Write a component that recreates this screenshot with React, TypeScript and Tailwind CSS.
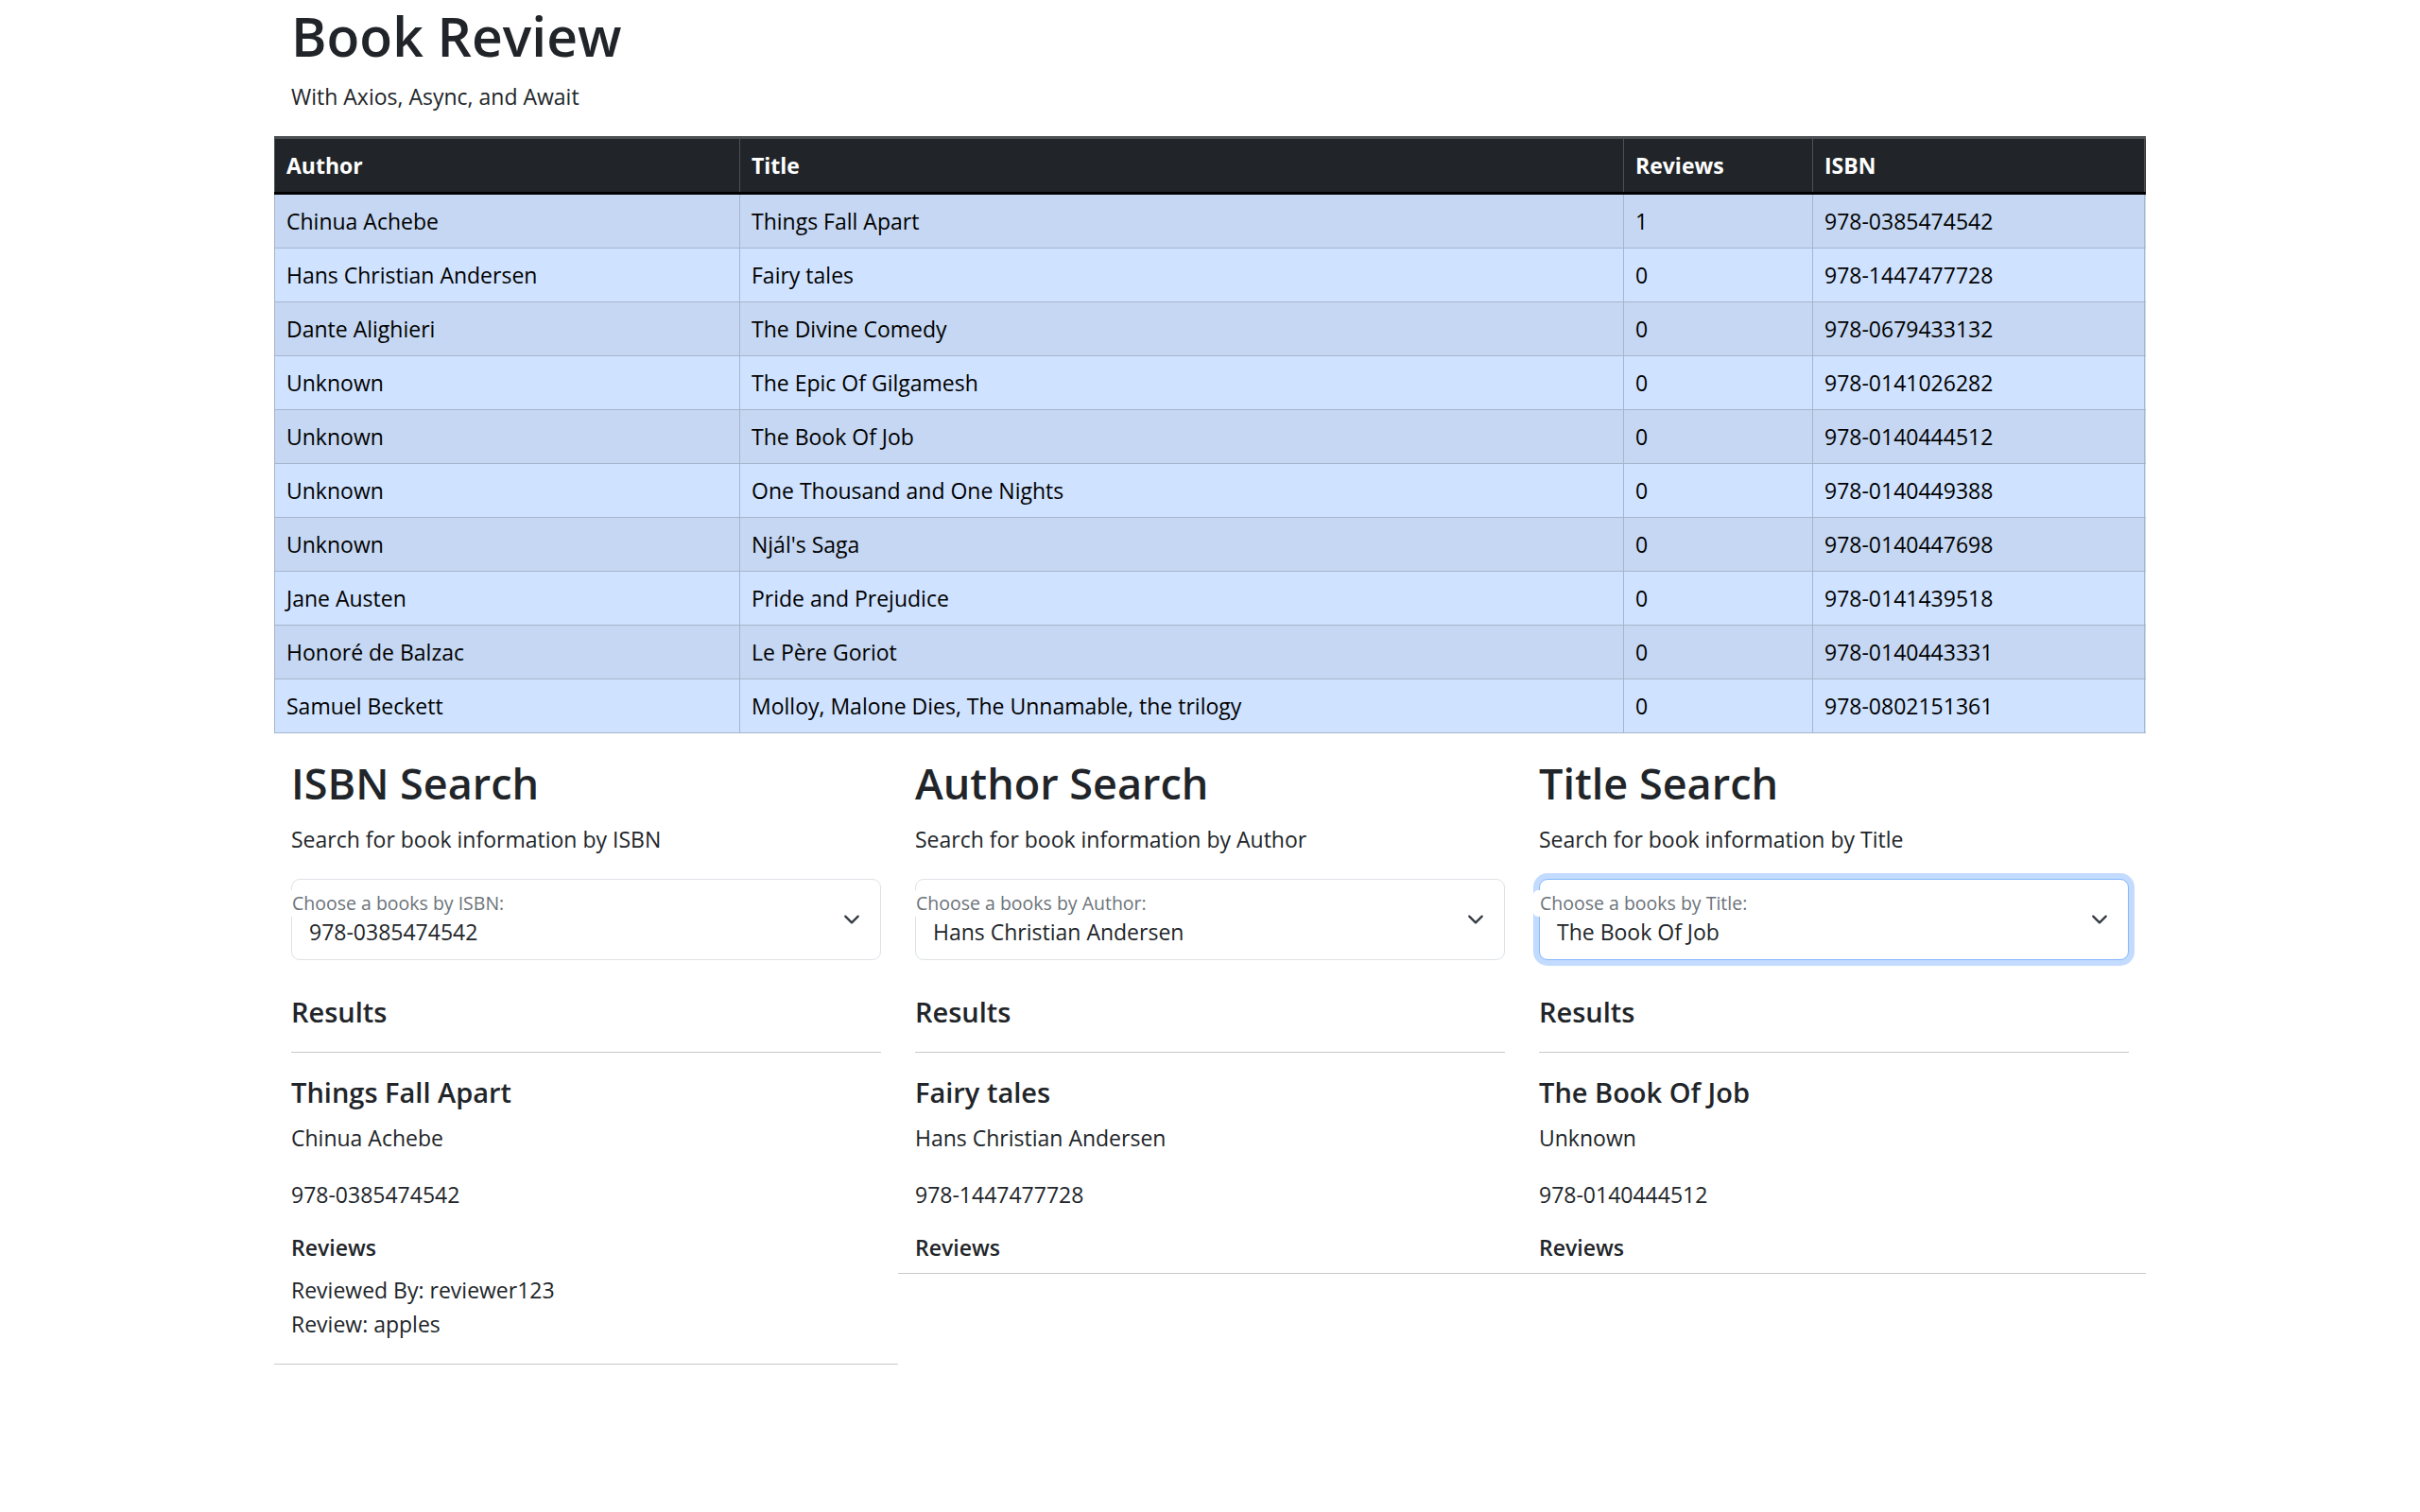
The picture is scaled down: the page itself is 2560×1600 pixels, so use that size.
import React from 'react';

const books = [
  ['Chinua Achebe', 'Things Fall Apart', '1', '978-0385474542'],
  ['Hans Christian Andersen', 'Fairy tales', '0', '978-1447477728'],
  ['Dante Alighieri', 'The Divine Comedy', '0', '978-0679433132'],
  ['Unknown', 'The Epic Of Gilgamesh', '0', '978-0141026282'],
  ['Unknown', 'The Book Of Job', '0', '978-0140444512'],
  ['Unknown', 'One Thousand and One Nights', '0', '978-0140449388'],
  ['Unknown', "Njál's Saga", '0', '978-0140447698'],
  ['Jane Austen', 'Pride and Prejudice', '0', '978-0141439518'],
  ['Honoré de Balzac', 'Le Père Goriot', '0', '978-0140443331'],
  ['Samuel Beckett', 'Molloy, Malone Dies, The Unnamable, the trilogy', '0', '978-0802151361'],
];

const cols = 'grid grid-cols-[492px_935px_200px_352px]';

function Chevron() {
  return (
    <svg viewBox="0 0 16 16" className="absolute right-[21px] top-1/2 -translate-y-1/2 w-[18px] h-[18px]">
      <path d="m2 5 6 6 6-6" fill="none" stroke="#343a40" strokeWidth="2" strokeLinecap="round" strokeLinejoin="round" />
    </svg>
  );
}

function SearchColumn({
  heading,
  by,
  value,
  focused,
  book,
  reviews,
}: {
  heading: string;
  by: string;
  value: string;
  focused?: boolean;
  book: string[];
  reviews?: { by: string; text: string }[];
}) {
  return (
    <div className="px-[18px] border-b border-[#c8c9ca]">
      <h2 className="text-[45px] leading-[58px] font-semibold mb-[12px]">{heading}</h2>
      <p className="mb-[24px]">Search for book information by {by}</p>
      <div
        className={
          'relative h-[86px] rounded-[9px] border bg-white ' +
          (focused ? 'border-[#86b7fe] shadow-[0_0_0_6px_rgba(13,110,253,0.25)]' : 'border-[#dee2e6]')
        }
      >
        <span className="absolute -left-[7px] top-[11px] h-[28px] pl-[7px] pr-[4px] bg-white text-[19.5px] leading-[28px] text-[#6c737a] rounded-[5px]">
          Choose a books by {by}:
        </span>
        <span className="absolute left-[18px] top-[37px] leading-[36px]">{value}</span>
        <Chevron />
      </div>
      <h5 className="mt-[37px] text-[29px] leading-[36px] font-semibold">Results</h5>
      <hr className="mt-[24px] mb-[24px] border-0 border-t border-[#c8c9ca]" />
      <h5 className="text-[29px] leading-[36px] font-semibold mb-[12px]">{book[1]}</h5>
      <p className="mb-[24px]">{book[0]}</p>
      <p className="mb-[24px]">{book[3]}</p>
      <h6 className="text-[23px] leading-[29px] font-semibold mb-[12px]">Reviews</h6>
      {reviews && reviews.length > 0 && (
        <div className="mb-[24px]">
          {reviews.map((r) => (
            <div key={r.by}>
              <div>Reviewed By: {r.by}</div>
              <div>Review: {r.text}</div>
            </div>
          ))}
        </div>
      )}
    </div>
  );
}

export default function App() {
  return (
    <div className="min-h-[1600px] bg-white text-[#212529] font-['Open_Sans','Noto_Sans',sans-serif] text-[23px] leading-[36px]">
      <div className="w-[1980px] mx-auto">
        <div className="px-[18px]">
          <h1 className="text-[57px] leading-[72px] font-semibold mb-[12px] pt-[2px] h-[72px]">Book Review</h1>
          <p className="mb-[24px]">With Axios, Async, and Await</p>
        </div>

        {/* books table */}
        <div className="mb-[24px]">
          <div className={cols + ' bg-[#212529] text-white font-bold border-t-[3px] border-t-[#4d5154] border-b-[3px] border-b-black h-[62px]'}>
            {['Author', 'Title', 'Reviews', 'ISBN'].map((h, i) => (
              <div
                key={h}
                className={'flex items-center px-[12px] border-l border-[#4d5154] ' + (i === 3 ? 'border-r' : '')}
              >
                {h}
              </div>
            ))}
          </div>
          {books.map((b, r) => (
            <div
              key={b[3]}
              className={cols + ' h-[57px] border-b border-[#a6b5cc] text-black ' + (r % 2 === 0 ? 'bg-[#c5d7f2]' : 'bg-[#cfe2ff]')}
            >
              {b.map((c, i) => (
                <div
                  key={i}
                  className={'flex items-center px-[12px] border-l border-[#a6b5cc] ' + (i === 3 ? 'border-r' : '')}
                >
                  {c}
                </div>
              ))}
            </div>
          ))}
        </div>

        <div className="grid grid-cols-3 items-start">
          <SearchColumn
            heading="ISBN Search"
            by="ISBN"
            value="978-0385474542"
            book={books[0]}
            reviews={[{ by: 'reviewer123', text: 'apples' }]}
          />
          <SearchColumn heading="Author Search" by="Author" value="Hans Christian Andersen" book={books[1]} />
          <SearchColumn heading="Title Search" by="Title" value="The Book Of Job" focused book={books[4]} />
        </div>
      </div>
    </div>
  );
}
